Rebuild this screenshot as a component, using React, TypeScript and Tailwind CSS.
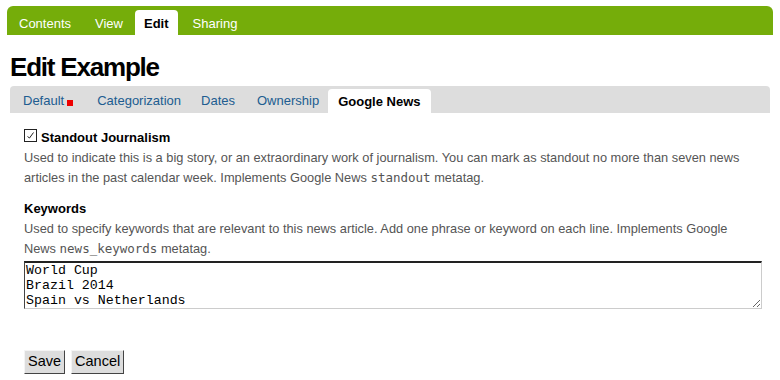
import { useState } from 'react'

const topTabs = ['Contents', 'View', 'Edit', 'Sharing']
const subTabs = ['Default', 'Categorization', 'Dates', 'Ownership', 'Google News']

function CheckBox({ checked, onChange }: { checked: boolean; onChange: () => void }) {
  return (
    <span onClick={onChange} className="w-[13px] h-[13px] border border-[#222] bg-white flex items-center justify-center cursor-pointer">
      {checked && (
        <svg width="9" height="9" viewBox="0 0 9 9">
          <path d="M1.5 5.5 L3.5 7 L7.5 1.5" fill="none" stroke="#222" strokeWidth="1" />
        </svg>
      )}
    </span>
  )
}

export default function App() {
  const [standout, setStandout] = useState(true)
  const [keywords, setKeywords] = useState('World Cup\nBrazil 2014\nSpain vs Netherlands')

  return (
    <div className="w-[780px] h-[380px] bg-white pt-[6px] font-['Liberation_Sans',Arial,sans-serif] text-[13px]">
      <div className="mx-[7px] h-[29px] bg-[#75ad0a] rounded-t-[6px] flex items-end">
        {topTabs.map(tab => (
          <span key={tab} className={tab === 'Edit'
            ? 'h-[25px] px-[9px] mr-[3px] bg-white rounded-t-[4px] text-black font-bold leading-[27px]'
            : 'h-[25px] px-[12px] text-white leading-[27px]'}>
            {tab}
          </span>
        ))}
      </div>

      <h1 className="mt-[17px] ml-[10px] text-[26px] leading-[30px] font-bold tracking-[-1.2px] text-black">Edit Example</h1>

      <div className="mt-[4px] mx-[10px] h-[27px] bg-[#dddddd] rounded-t-[4px] flex items-end pl-[2px]">
        {subTabs.map(tab => (
          <span key={tab} className={tab === 'Google News'
            ? '-ml-[2px] h-[24px] px-[10px] bg-white rounded-t-[4px] text-black font-bold leading-[26px]'
            : tab === 'Default'
              ? 'h-[24px] pl-[11px] pr-[13px] text-[#205c90] leading-[26px] flex items-center'
              : tab === 'Categorization'
                ? 'h-[24px] pl-[11px] pr-[9px] text-[#205c90] leading-[26px] flex items-center'
                : 'h-[24px] px-[11px] text-[#205c90] leading-[26px] flex items-center'}>
            {tab}
            {tab === 'Default' && <span className="ml-[3px] mt-[4px] w-[6px] h-[6px] bg-[#ee0000] inline-block" />}
          </span>
        ))}
      </div>

      <div className="px-[24px] pt-[16px] w-[738px] box-content">
        <div className="flex items-start gap-[4px] leading-[16px]">
          <CheckBox checked={standout} onChange={() => setStandout(!standout)} />
          <span className="font-bold text-black mt-[1px]">Standout Journalism</span>
        </div>
        <p className="mt-[2px] text-[#555] text-[12.8px] leading-[20px]">
          Used to indicate this is a big story, or an extraordinary work of journalism. You can mark as standout no more than seven news articles in the past calendar week. Implements Google News <code className="font-['DejaVu_Sans_Mono',monospace] text-[12.5px] leading-none">standout</code> metatag.
        </p>

        <div className="mt-[13px] font-bold text-black leading-[16px]">Keywords</div>
        <p className="mt-[2px] text-[#555] text-[12.8px] leading-[19.5px]">
          Used to specify keywords that are relevant to this news article. Add one phrase or keyword on each line. Implements Google News <code className="font-['DejaVu_Sans_Mono',monospace] text-[12.5px] leading-none">news_keywords</code> metatag.
        </p>
        <textarea
          value={keywords}
          onChange={e => setKeywords(e.target.value)}
          className="mt-[3px] block w-[738px] h-[48px] px-[1px] py-0 border-t-2 border-l border-r border-b border-t-[#222] border-l-[#444] border-r-[#ccc] border-b-[#ccc] bg-white text-black font-['Liberation_Mono',monospace] text-[13.3px] leading-[15px] outline-none"
        />

        <div className="mt-[41px] flex gap-[6px]">
          <button className="h-[24px] px-[3px] bg-[#dddddd] text-black text-[14.5px] border border-t-[#f4f4f4] border-l-[#f4f4f4] border-r-[#444] border-b-[#444]">Save</button>
          <button className="h-[24px] px-[3px] bg-[#dddddd] text-black text-[14.5px] border border-t-[#f4f4f4] border-l-[#f4f4f4] border-r-[#444] border-b-[#444]">Cancel</button>
        </div>
      </div>
    </div>
  )
}
